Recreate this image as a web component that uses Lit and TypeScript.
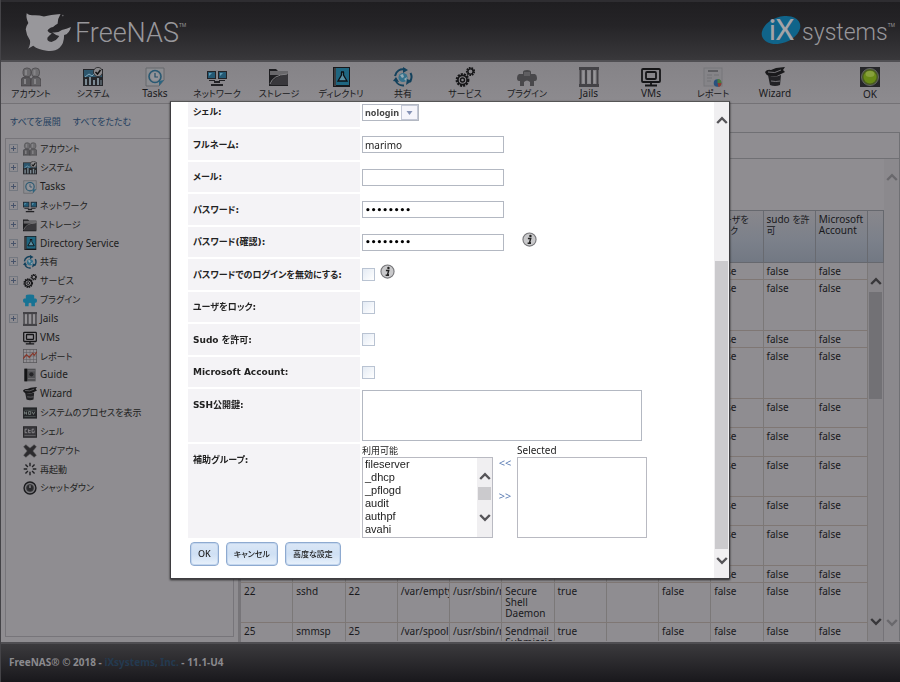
import { LitElement, html, css, svg } from "lit";
import { customElement } from "lit/decorators.js";

type Art = ReturnType<typeof svg>;

// Icon artwork on a 20 x 20 grid, shared by the toolbar and the tree.
const art: Record<string, Art> = {
  account: svg`<g stroke="#3c3b3e" stroke-width=".6"><rect x="2" y="1" width="8" height="9" rx="3.5" fill="#6c6b6e"/><rect x="10.500" y="1" width="8" height="9" rx="3.500" fill="#6f6e71"/><path d="M0 19V14q0-4 4-4h3q3 0 3 4v5z" fill="#59585b"/><path d="M10 19v-5q0-4 3-4h3q4 0 4 4v5z" fill="#636265"/></g><path d="M4 3h2v5h-2zM12.500 3h2v5h-2zM3 12h2v5h-2zM13 12h2v5h-2z" fill="#858487"/>`,
  system: svg`<rect x="0" y="2" width="20" height="17" fill="#25262a"/><rect x="1" y="3" width="18" height="7" fill="#2d566d"/><path d="M2 10l4-3 3 2 4-4" stroke="#7fa9bd" fill="none"/><path d="M2 18v-6h2v6zM6 18v-8h2v8zM10 18v-5h2v5zM14 18v-7h2v7zM17.500 18v-5h1v5z" fill="#7b8a93"/><circle cx="15" cy="5" r="4.600" fill="#8a898c" stroke="#242427" stroke-width=".8"/><path d="M12.500 5l2 2 3-4" stroke="#111" stroke-width="1.500" fill="none"/>`,
  tasks: svg`<path d="M1 1h18v12l-5 6H1z" fill="#8b8c90" stroke="#67686c"/><circle cx="10" cy="9.500" r="6" fill="none" stroke="#285872" stroke-width="1.600"/><circle cx="10" cy="9.500" r="4" fill="#94959a"/><path d="M10 6v4h3" stroke="#244e66" fill="none" stroke-width="1.200"/><path d="M14 19v-5l5-1z" fill="#2b6480"/>`,
  network: svg`<rect x="0" y="4" width="9" height="8" fill="#232327"/><rect x="1" y="5" width="7" height="6" fill="#245974"/><rect x="11" y="4" width="9" height="8" fill="#232327"/><rect x="12" y="5" width="7" height="6" fill="#245974"/><path d="M2 6h3l-3 3zM13 6h3l-3 3z" fill="#5e9bb4"/><path d="M2 13h6v1H2zM12 13h6v1h-6zM7 14h6v2H7zM4 17h12v2H4z" fill="#222225"/>`,
  storage: svg`<path d="M0 2h7l2 2h10v15H0z" fill="#1e1e21"/><path d="M1 4h18v4H1z" fill="#69686b"/><path d="M1 18q4-9 18-11v11z" fill="#39383c"/><path d="M1 17q3-9 17-10" stroke="#828184" fill="none"/>`,
  directory: svg`<rect x="2" y="0" width="17" height="20" fill="#17181b"/><rect x="5" y="1" width="13" height="17" fill="#1f6680"/><path d="M10 5h3M10.500 5v3L7 14h9l-3.500-6V5" fill="#5a8fa2" stroke="#0d1114" stroke-width="1.300"/><path d="M4 1v18" stroke="#656468"/>`,
  share: svg`<g fill="none" stroke="#13415c" stroke-width="2"><path d="M2 9A8 8 0 0 1 12 2.500M17.500 6a8 8 0 0 1-1 9M11 18.500A8 8 0 0 1 2.500 13"/></g><path d="M10 0l5 3-5 3zM19 14l-6 4 1-6zM0 14l3-4 3 5z" fill="#13415c"/><circle cx="10" cy="10.500" r="4.500" fill="#35718c"/><path d="M7 8l3-1 1 3-2 1zM11 12l3-2-1 4z" fill="#93a9b3"/>`,
  service: svg`<g fill="none" stroke="#161618"><circle cx="7.500" cy="13" r="5.600" stroke-width="2.600" stroke-dasharray="2 1"/><circle cx="7.500" cy="13" r="4.600" stroke-width="1.600"/><circle cx="7.500" cy="13" r="2" stroke-width="1.400"/><circle cx="15.500" cy="4.500" r="3.600" stroke-width="2" stroke-dasharray="1.600 .9"/><circle cx="15.500" cy="4.500" r="2.600" stroke-width="1.400"/></g>`,
  pluginGray: svg`<path d="M6 5q0-2 4-2t4 2v2h4q2 1 2 4t-2 3h-1v5h-4v-4q-3-3-6 0v4H3v-5H2q-2 0-2-3t2-4h4z" fill="#49484b"/><path d="M7 5h6v4H7z" fill="#5f5e61"/>`,
  plugin: svg`<path d="M4 4q0-2 6-2t6 2v4h2q2 0 2 3t-2 3h-1v5h-5v-4q-2-2-4 0v4H3v-5H2q-2 0-2-3t2-3h2z" fill="#177394"/>`,
  jails: svg`<rect x="0" y="0" width="20" height="3" fill="#444347"/><rect x="0" y="17" width="20" height="3" fill="#444347"/><path d="M1.500 2v16M7 2v16M13 2v16M18.500 2v16" stroke="#444347" stroke-width="2"/><path d="M4.200 4v12M10 4v12M15.700 4v12" stroke="#a09fa2" stroke-width=".8"/>`,
  vms: svg`<g fill="none" stroke="#151517"><rect x="1" y="2" width="18" height="13" rx="1" stroke-width="1.800"/><rect x="5" y="5" width="10" height="7" rx="1" stroke-width="1.800"/><path d="M10 15v3M4 18.500h12" stroke-width="1.800"/></g>`,
  report: svg`<rect x="1" y="1" width="18" height="18" fill="#858488" stroke="#77767a"/><path d="M5 4h10" stroke="#515054" stroke-width="1.500"/><path d="M4 8h5M4 11h5M4 14h4M11 8h5" stroke="#737277"/><circle cx="14.500" cy="16" r="3.800" fill="#28517f"/><path d="M14.500 16v-4a4 4 0 0 1 4 4z" fill="#4c7a3c"/><path d="M14.500 16h4a4 4 0 0 1-3 4z" fill="#8e3d31"/>`,
  wizard: svg`<path d="M3 8q6 3 13 0l-1 10q-5 2-10 0z" fill="#222225"/><path d="M0 5q2-3 6-2l5-2 9-1-2 3 2 2-8 4q-9 1-11-2z" fill="#19191b"/><path d="M3 5q7 2 13-2M6 14q5 1 9 0" stroke="#77767a" fill="none"/>`,
  ok: svg`<rect width="20" height="20" fill="#262629"/><circle cx="10" cy="10" r="8.500" fill="#4a5b22" stroke="#626267"/><circle cx="10" cy="10" r="6.500" fill="#698a17"/><ellipse cx="10" cy="7" rx="4.500" ry="3" fill="#87a03c"/>`,
  chart: svg`<rect x=".5" y=".5" width="19" height="19" fill="#918f93" stroke="#555458"/><path d="M5 0v20M10 0v20M15 0v20M0 5h20M0 10h20M0 15h20" stroke="#5f5e62" stroke-width=".8"/><path d="M0 14l5-6 4 4 5-6 2 3 4-5" stroke="#85382c" stroke-width="1.800" fill="none"/>`,
  guide: svg`<rect x="2" y="1" width="16" height="18" fill="#505053"/><path d="M2 1h4v18H2z" fill="#141416"/><circle cx="12" cy="9" r="3" fill="#252528"/><path d="M7 4h10M7 15h10" stroke="#7b7a7d"/>`,
  procs: svg`<rect x="0" y="2" width="20" height="16" fill="#242528"/><path d="M2 6h16M2 15h16" stroke="#545b5c"/><path d="M2 12V8l3 4V8M8 12V8h3v4zM13 8l2 4 2-4" stroke="#8c9694" fill="none"/>`,
  shell: svg`<rect x=".5" y="2.500" width="19" height="15" fill="#39383c" stroke="#161618"/><path d="M2 15h16" stroke="#6b6a6d"/><path d="M6 6H3v5h3M8 6v5h3M16 6h-3v5h3v-3M8 8h3" stroke="#a09fa2" fill="none"/>`,
  logout: svg`<path d="M4 1l6 5 6-5 3 3-5 6 5 6-3 3-6-5-6 5-3-3 5-6-5-6z" fill="#2c2b2e" stroke="#4a494c" stroke-width=".8"/>`,
  restart: svg`<path d="M10 1v5M10 14v5M1 10h5M14 10h5M3.500 3.500L7 7M13 13l3.500 3.500M3.500 16.500L7 13M13 7l3.500-3.500" stroke="#232326" stroke-width="2"/>`,
  shutdown: svg`<circle cx="10" cy="10" r="8.500" fill="#77767a" stroke="#1b1b1e" stroke-width="2"/><circle cx="10" cy="10" r="5" fill="#29292c" stroke="#3b3b3e"/><path d="M9 6h2v4H9z" fill="#858488"/>`,
};

const icon = (name: string) =>
  html`<svg class="icon" viewBox="0 0 20 20" aria-hidden="true">${art[name]}</svg>`;

const chevron = (dir: "up" | "down") => html`<svg class="chev" viewBox="0 0 10 8" aria-hidden="true">
  <path d=${dir === "up" ? "M1 6.500L5 2.500L9 6.500" : "M1 1.500L5 5.500L9 1.500"} fill="none" stroke="currentColor" stroke-width="2"/></svg>`;

const info = html`<svg class="info" viewBox="0 0 16 16" role="img" aria-label="info">
  <circle cx="8" cy="8" r="7" fill="#c9c9cb" stroke="#77777a" stroke-width="1.200"/>
  <circle cx="9" cy="4.300" r="1.300" fill="#222"/><path d="M6.300 7h3L8 11.500h1.500M6 12h3.600" stroke="#222" stroke-width="1.500" fill="none"/></svg>`;

const tools: [string, string][] = [
  ["account", "アカウント"], ["system", "システム"], ["tasks", "Tasks"], ["network", "ネットワーク"],
  ["storage", "ストレージ"], ["directory", "ディレクトリ"], ["share", "共有"], ["service", "サービス"],
  ["pluginGray", "プラグイン"], ["jails", "Jails"], ["vms", "VMs"], ["report", "レポート"], ["wizard", "Wizard"],
];

const nodes: [string, string, boolean][] = [
  ["account", "アカウント", true], ["system", "システム", true], ["tasks", "Tasks", true],
  ["network", "ネットワーク", true], ["storage", "ストレージ", true], ["directory", "Directory Service", true],
  ["share", "共有", true], ["service", "サービス", true], ["plugin", "プラグイン", false],
  ["jails", "Jails", true], ["vms", "VMs", false], ["chart", "レポート", false], ["guide", "Guide", false],
  ["wizard", "Wizard", false], ["procs", "システムのプロセスを表示", false], ["shell", "シェル", false],
  ["logout", "ログアウト", false], ["restart", "再起動", false], ["shutdown", "シャットダウン", false],
];

const textClass = (s: string) => (/^[\x00-\x7f]+$/.test(s) ? "" : "ja");

// Number of text lines each row of the user table takes.
const upperRows = [1, 4, 1, 4, 2, 2, 3, 2, 3, 1];
const lowerRows = [
  ["22", "sshd", "22", "/var/empty", "/usr/sbin/nologin", "Secure Shell Daemon", "true", "", "false", "false", "false", "false"],
  ["25", "smmsp", "25", "/var/spool", "/usr/sbin/nologin", "Sendmail Submission", "true", "", "false", "false", "false", "false"],
];

@customElement("app-root")
export class AppRoot extends LitElement {
  static styles = css`
    :host { display: block; font: 10px/11px "Noto Sans", "Noto Sans CJK JP", sans-serif; color: #19191c; }
    * { box-sizing: border-box; }
    .ja { font-size: 9px; font-feature-settings: "palt"; }
    a { text-decoration: none; color: #24405f; }
    .page { height: 100vh; display: flex; flex-direction: column; background: #8f8d91; border-left: 1px solid #444347; overflow: hidden; }
    .top { flex: none; height: 62px; padding: 3px 5px 0 24px; display: flex; align-items: center; background: linear-gradient(#1f1e21, #252427 40%, #39383b); border-top: 2px solid #2e2d31; border-bottom: 2px solid #504f53; color: #98979b; }
    .shark { width: 47px; height: 41px; margin-right: 3px; }
    .brand { font: 300 27px/40px Roboto, sans-serif; }
    .tm { font: 5px/6px "Noto Sans", sans-serif; align-self: flex-start; margin-top: 17px; }
    .ix { margin-left: auto; width: 40px; height: 32px; margin-bottom: 6px; overflow: visible; }
    .ixname { font: 300 23px/36px Roboto, sans-serif; margin-left: 1px; }
    .bar { flex: none; height: 42px; display: flex; background: linear-gradient(#858387, #8d8b8f); border-bottom: 1px solid #747276; }
    .tool { flex: 0 1 62px; margin: 0; padding: 5px 0 0; border: 0; background: none; font: inherit; line-height: 11px; color: inherit; display: flex; flex-direction: column; align-items: center; gap: 1px; white-space: nowrap; }
    .tool .icon { width: 20px; height: 20px; flex: none; }
    .tool:first-child { margin-left: -1px; }
    .status { margin-left: auto; flex-basis: 60px; gap: 2px; }
    .main { flex: 1; min-height: 0; display: flex; }
    .side { flex: none; width: 240px; padding: 12px 4px 5px; display: flex; flex-direction: column; border-right: 3px solid #777579; }
    .links { display: flex; gap: 12px; padding-left: 5px; height: 22px; }
    .tree { flex: 1; min-height: 0; margin: 0; padding: 0; list-style: none; border: 1px solid #77757a; }
    .tree li { height: 19px; display: flex; align-items: center; gap: 3px; padding-left: 3px; }
    .tree li:nth-child(6n) { height: 18px; }
    .tree .icon { width: 14px; height: 14px; flex: none; }
    .tree a { color: #1d1d20; }
    .plus { width: 9px; height: 9px; padding: 0; margin-right: 2px; background: linear-gradient(#47536a, #47536a) center / 5px 1px no-repeat, linear-gradient(#47536a, #47536a) center / 1px 5px no-repeat; border: 1px solid #747880; }
    .gap { width: 9px; margin-right: 2px; }
    .work { flex: 1; min-width: 0; padding: 28px 0 1px; display: flex; flex-direction: column; }
    .tabs { height: 27px; flex: none; border: 1px solid #707074; border-left: 0; }
    .pane { flex: 1; min-height: 0; display: flex; border-right: 1px solid #707074; }
    .scroller { flex: 1; min-width: 0; padding-top: 51px; display: flex; flex-direction: column; }
    .headrow, .bodyrow { display: flex; }
    .headrow { flex: none; background: linear-gradient(#88878c, #7b808a 60%, #727883); border: 1px solid #66686e; border-left: 0; height: 53px; }
    .bodyrow { flex: 1; min-height: 0; overflow: hidden; border-right: 1px solid #757378; }
    table { flex: 1; min-width: 0; width: 0; table-layout: fixed; border-collapse: separate; border-spacing: 0; align-self: flex-start; }
    td, th { padding: 3px 0 0 3px; text-align: left; vertical-align: top; font-weight: 400; border-right: 1px solid #7b7878; overflow: hidden; }
    td { border-bottom: 1px solid #7f7774; }
    th { height: 51px; border-color: #686a70; }
    .path { white-space: nowrap; }
    .l1 { height: 17px; } .l2 { height: 29px; } .l3 { height: 40px; } .l4 { height: 51px; }
    .edge { flex: none; width: 15px; }
    .sb { flex: none; width: 15px; display: flex; flex-direction: column; align-items: center; background: #88868a; color: #38373a; padding: 13px 0 14px; }
    .sb .thumb { width: 13px; height: 107px; margin-top: 6px; background: #727175; }
    .sb .chev:last-child { margin-top: auto; }
    .chev { width: 12px; height: 10px; flex: none; }
    .outer { background: #8b898d; color: #69686c; padding: 13px 0; }
    .foot { flex: none; height: 40px; padding: 12px 8px; background: linear-gradient(#3b3a3d, #19181c); border-top: 2px solid #4f4e52; color: #8b8a8e; font: bold 10px/13px "Noto Sans", sans-serif; }
    .foot a { color: #243a50; }

    .veil { position: fixed; inset: 0; padding: 101px 170px 103px; display: flex; }
    .dialog { flex: 1; min-width: 0; display: flex; background: #fff; border: 1px solid #3e3d40; border-top-color: #555; box-shadow: 0 1px 2px #222; overflow: hidden; }
    .body { flex: 1; min-width: 0; overflow: hidden; padding-left: 17px; }
    form { margin-top: -7px; }
    .row { display: grid; grid-template-columns: 172px 1fr; column-gap: 2px; align-items: center; height: 33px; padding-bottom: 2px; }
    .row:nth-child(odd) { height: 32px; }
    .row.first { height: 34px; }
    .name { align-self: stretch; display: flex; align-items: center; padding-left: 5px; background: #f4f3f6; font: bold 9px/12px "DejaVu Sans", "Noto Sans CJK JP", sans-serif; font-feature-settings: "palt"; color: #222; }
    .row.first .name, .row.first .picker { margin-top: 2px; }
    .row.key { height: 55px; align-items: start; }
    .row.groups { height: 96px; align-items: start; }
    .key .name, .groups .name { align-items: flex-start; padding-top: 10px; }
    .ctl { display: flex; align-items: center; }
    input.text { width: 142px; height: 17px; padding: 0 2px; border: 1px solid #b3b8c2; font: inherit; color: #222; background: #fff; outline: 0; }
    input.pw { font: bold 9px/15px "DejaVu Sans", sans-serif; color: #000; }
    input.check { appearance: none; width: 13px; height: 13px; margin: 0; border: 1px solid #b9c3d2; background: linear-gradient(135deg, #e4ebf4, #fff); }
    .info { width: 15px; height: 15px; margin: 0 0 6px 18px; }
    .check + .info { margin-left: 5px; }
    .picker { position: relative; display: flex; width: 57px; height: 17px; color: #333; }
    .picker select { appearance: none; width: 57px; height: 17px; padding: 0 0 0 2px; margin: 0; border: 1px solid #b3b8c2; border-radius: 0; background: #fff; font: bold 9px/15px "Noto Sans", sans-serif; color: #444; }
    .arrow { position: absolute; right: 1px; top: 1px; width: 17px; height: 15px; border: 1px solid #c3c8d6; background: #f5f5fb; pointer-events: none; }
    textarea { display: block; width: 280px; height: 51px; border: 1px solid #b3b8c2; resize: none; padding: 2px; margin-top: 1px; }
    .pair { display: grid; grid-template-columns: 131px 24px 130px; grid-template-rows: 13px 81px; }
    .pair label { line-height: 13px; align-self: center; color: #222; }
    .list { display: flex; border: 1px solid #b9bac2; }
    .list select { flex: 1; min-width: 0; border: 0; padding: 0; margin: 0; border-radius: 0; outline: 0; background: #fff; overflow: hidden; scrollbar-width: none; font: 11px/13px "Liberation Sans", sans-serif; color: #222; }
    .list option { padding: 0 2px; height: 13px; min-height: 13px; line-height: 13px; }
    .list .sb { background: #f0eff1; color: #555458; padding: 13px 0; }
    .list .sb .thumb { height: 13px; margin-top: 6px; background: #cbcacd; }
    .list .sb .chev:last-child { margin-top: 13px; }
    .moves { display: flex; flex-direction: column; align-items: center; gap: 22px; }
    .moves a { color: #5e7fb5; font-size: 11px; }
    .btns { display: flex; gap: 7px; padding: 2px 0 0 2px; }
    .btn { height: 24px; padding: 0 7px; border: 1px solid #8eaad0; border-radius: 4px; background: linear-gradient(#dbe7f6, #cfe0f4 50%, #e8f1fb); box-shadow: inset 0 0 0 1px #c3d6ee; font: 500 9px/12px "Noto Sans", "Noto Sans CJK JP", sans-serif; color: #222; }
    .btn.small { font-size: 8px; font-feature-settings: "palt"; }
    .dialog > .sb { background: #f0eff1; color: #555458; padding: 13px 0 12px; }
    .dialog > .sb .thumb { flex: 1; height: auto; margin: 136px 0 7px; background: #cbcacd; }
    .dialog > .sb .chev:last-child { margin-top: 0; }
  `;

  private checkRow(id: string, label: string, hint = false) {
    return html`<div class="row"><label class="name" for=${id}>${label}</label>
      <div class="ctl"><input class="check" type="checkbox" id=${id} />${hint ? info : ""}</div></div>`;
  }

  render() {
    return html`
      <div class="page">
        <header class="top">
          <svg class="shark" viewBox="72 34 144 126" aria-hidden="true">
            <path fill="#98979b" d="M77 38Q84 45 96 44Q115 43 130 48Q150 42 181 40Q172 54 172 70Q166 72 158 80Q144 83 141 92Q144 98 154 100Q148 104 141 112Q137 124 153 126Q168 123 177 108Q166 105 155 96Q172 99 185 89Q199 87 213 80Q208 101 192 105Q192 132 178 144Q162 157 138 153Q113 151 97 138L81 147Q90 134 87 121Q76 106 74 87Q76 76 82 68Q74 52 77 38z"/>
            <circle cx="188" cy="45" r="2.500" fill="#68676b"/>
          </svg>
          <span class="brand">FreeNAS</span><span class="tm">TM</span>
          <svg class="ix" viewBox="0 0 40 32" aria-hidden="true">
            <ellipse cx="20" cy="16" rx="20" ry="13" transform="rotate(-20 20 16)" fill="#10648a"/>
            <text x="8" y="26" font-family="Lato" font-weight="500" font-size="28" fill="#a4a3a7">iX</text>
          </svg>
          <span class="ixname">systems</span><span class="tm">TM</span>
        </header>
        <nav class="bar">
          ${tools.map(([i, t]) => html`<button class="tool">${icon(i)}<span class=${textClass(t)}>${t}</span></button>`)}
          <button class="tool status">${icon("ok")}<span>OK</span></button>
        </nav>
        <main class="main">
          <aside class="side">
            <div class="links ja"><a href="#expand">すべてを展開</a><a href="#collapse">すべてをたたむ</a></div>
            <ul class="tree">
              ${nodes.map(([i, t, open]) => html`<li>
                ${open ? html`<button class="plus" aria-label=${t}></button>` : html`<span class="gap"></span>`}
                ${icon(i)}<a href="#node" class=${textClass(t)}>${t}</a></li>`)}
            </ul>
          </aside>
          <section class="work">
            <div class="tabs"></div>
            <div class="pane">
              <div class="scroller">
                <div class="headrow">
                  <table><tr>
                    ${Array.from({ length: 9 }, () => html`<th></th>`)}
                    <th class="ja">ユーザを<br>ロック</th><th>sudo <span class="ja">を許可</span></th><th>Microsoft Account</th>
                  </tr></table>
                  <div class="edge"></div>
                </div>
                <div class="bodyrow">
                  <table>
                    ${upperRows.map((n) => html`<tr class="l${n}">
                      ${Array.from({ length: 12 }, (_, c) => html`<td>${c > 8 ? "false" : ""}</td>`)}</tr>`)}
                    ${lowerRows.map((r) => html`<tr class="l3">
                      ${r.map((v, c) => html`<td class=${c === 3 || c === 4 ? "path" : ""}>${v}</td>`)}</tr>`)}
                  </table>
                  <div class="sb">${chevron("up")}<div class="thumb"></div>${chevron("down")}</div>
                </div>
              </div>
              <div class="sb outer">${chevron("up")}${chevron("down")}</div>
            </div>
          </section>
        </main>
        <footer class="foot">FreeNAS® © 2018 - <a href="#ix">iXsystems, Inc.</a> - 11.1-U4</footer>
      </div>

      <div class="veil">
        <div class="dialog" role="dialog">
          <div class="body">
            <form>
              <div class="row first"><label class="name" for="shell">シェル:</label>
                <div class="picker"><select id="shell"><option>nologin</option></select>
                  <svg class="arrow" viewBox="0 0 15 13" aria-hidden="true"><path d="M4.500 5h6l-3 4z" fill="#8592b5"/></svg></div></div>
              <div class="row"><label class="name" for="full">フルネーム:</label>
                <div class="ctl"><input class="text" id="full" value="marimo" /></div></div>
              <div class="row"><label class="name" for="mail">メール:</label>
                <div class="ctl"><input class="text" id="mail" /></div></div>
              <div class="row"><label class="name" for="pw">パスワード:</label>
                <div class="ctl"><input class="text pw" type="password" id="pw" value="password" /></div></div>
              <div class="row"><label class="name" for="pw2">パスワード(確認):</label>
                <div class="ctl"><input class="text pw" type="password" id="pw2" value="password" />${info}</div></div>
              ${this.checkRow("nopw", "パスワードでのログインを無効にする:", true)}
              ${this.checkRow("lock", "ユーザをロック:")}
              ${this.checkRow("sudo", "Sudo を許可:")}
              ${this.checkRow("ms", "Microsoft Account:")}
              <div class="row key"><label class="name" for="ssh">SSH公開鍵:</label><textarea id="ssh"></textarea></div>
              <div class="row groups"><span class="name">補助グループ:</span>
                <div class="pair">
                  <label class="ja" for="avail">利用可能</label><span></span><label for="sel">Selected</label>
                  <div class="list">
                    <select id="avail" multiple size="6">
                      ${["fileserver", "_dhcp", "_pflogd", "audit", "authpf", "avahi"].map((g) => html`<option>${g}</option>`)}
                    </select>
                    <div class="sb">${chevron("up")}<div class="thumb"></div>${chevron("down")}</div>
                  </div>
                  <div class="moves"><a href="#remove">&lt;&lt;</a><a href="#add">&gt;&gt;</a></div>
                  <div class="list"><select id="sel" multiple size="6"></select></div>
                </div></div>
              <div class="btns"><button type="button" class="btn">OK</button><button type="button" class="btn small">キャンセル</button><button type="button" class="btn small">高度な設定</button></div>
            </form>
          </div>
          <div class="sb">${chevron("up")}<div class="thumb"></div>${chevron("down")}</div>
        </div>
      </div>
    `;
  }
}
